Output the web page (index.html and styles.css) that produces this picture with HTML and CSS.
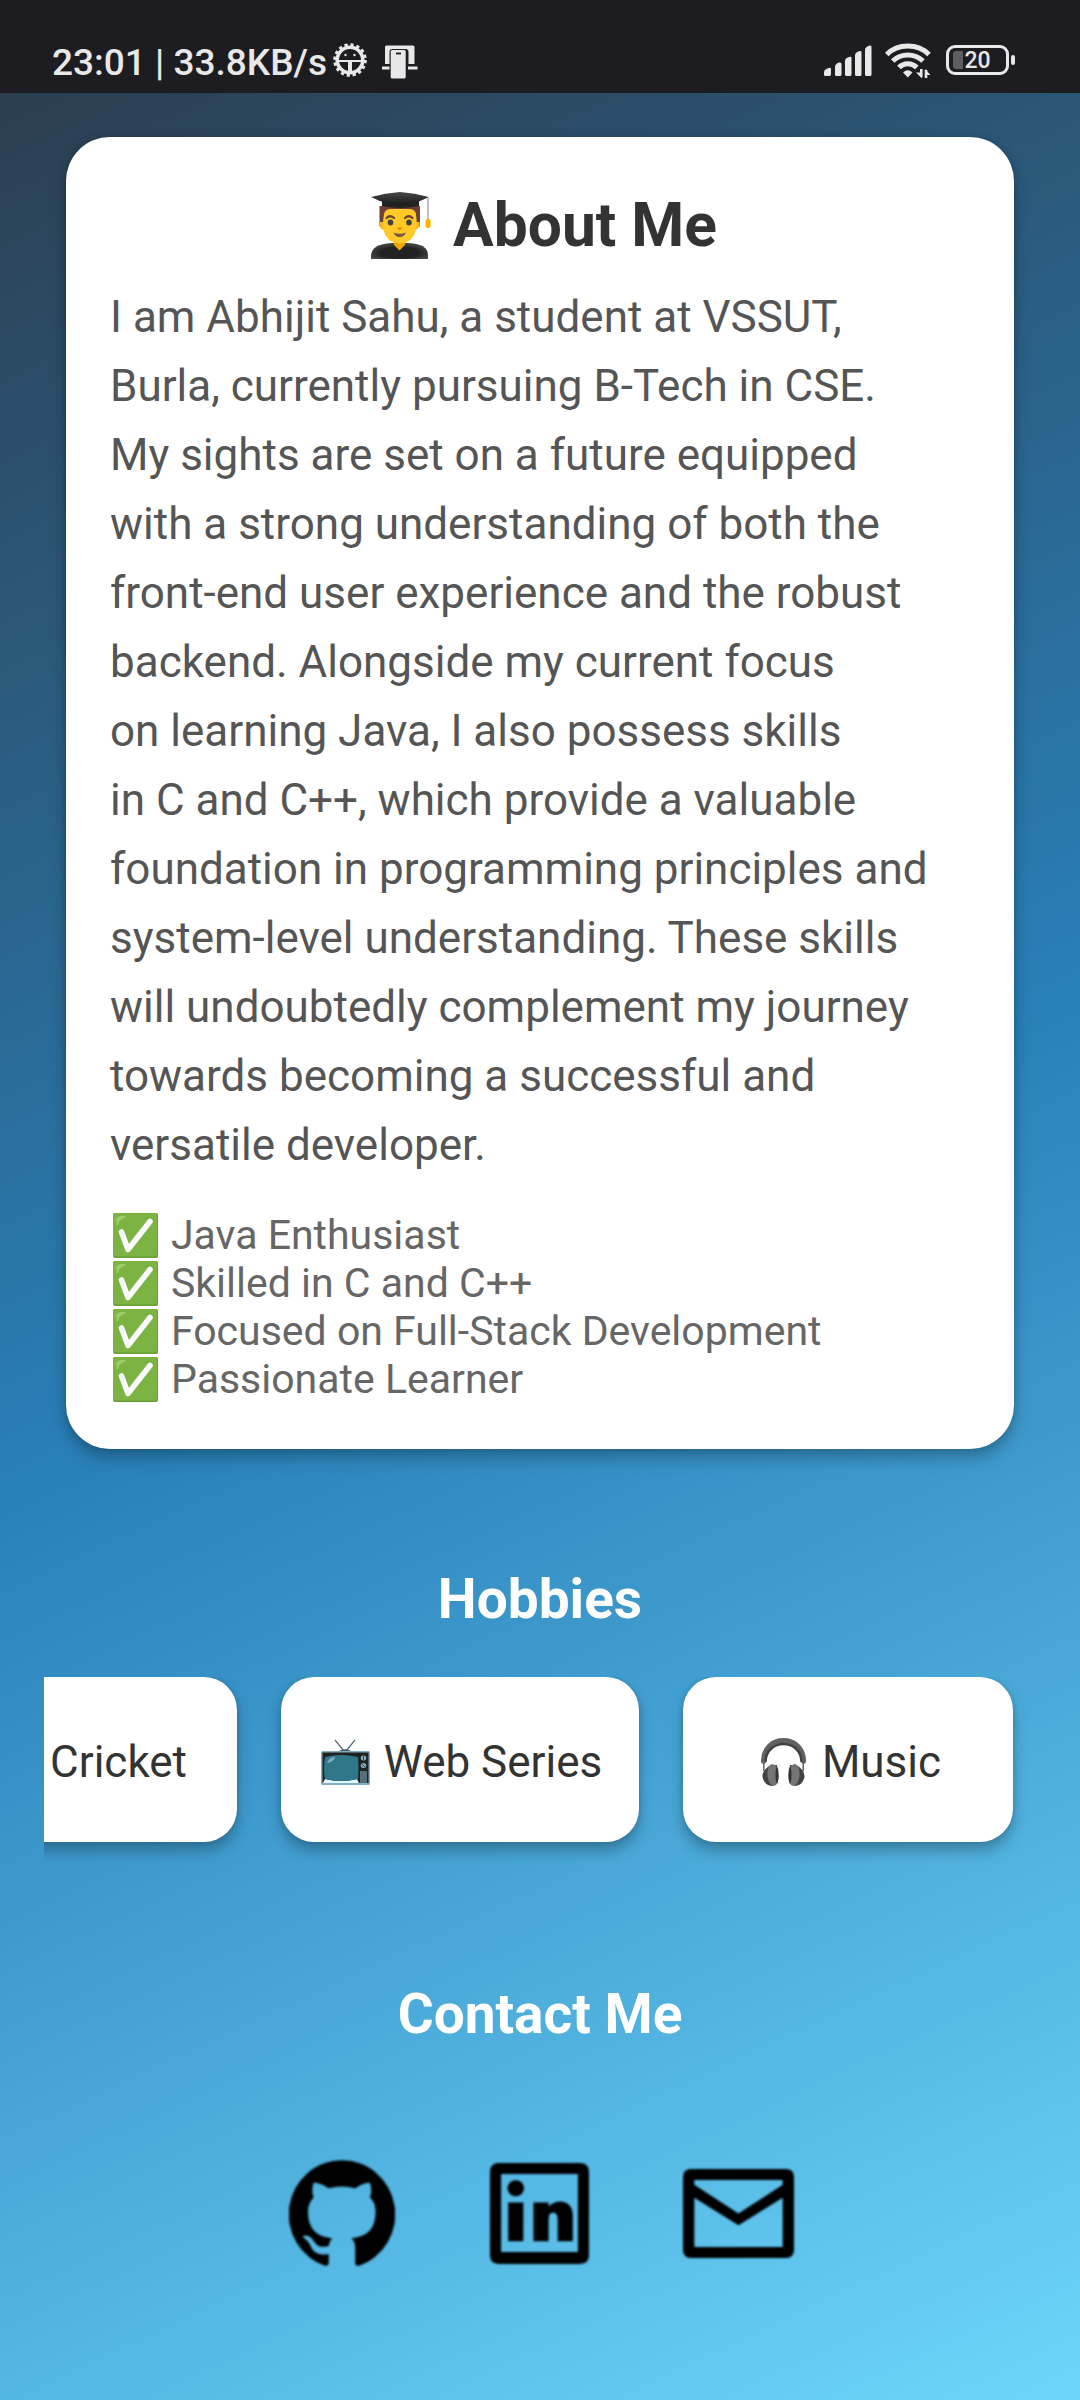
FILE: index.html
```html
<!DOCTYPE html>
<html lang="en">
<head>
<meta charset="utf-8">
<title>About Me</title>
<link rel="stylesheet" href="styles.css">
</head>
<body>
<svg width="0" height="0" class="defs" aria-hidden="true">
  <defs>
    <linearGradient id="cap" x1="0" y1="0" x2="0" y2="1"><stop offset="0" stop-color="#4a4a4a"/><stop offset="1" stop-color="#1c1c1c"/></linearGradient>
    <radialGradient id="gown" cx=".5" cy=".6" r=".6"><stop offset=".55" stop-color="#212121"/><stop offset="1" stop-color="#4c4c4c"/></radialGradient>
    <symbol id="check" viewBox="0 0 45 45">
      <rect width="45" height="45" rx="2" fill="#689f38"/>
      <rect width="44" height="43.500" rx="2" fill="#7cb342"/>
      <path d="M3.500 11V6.500Q4 3 8 3H12Q14 3.500 11.500 5Q6 6 5.300 11Q4 13.500 3.500 11Z" fill="#aed581" opacity=".7"/>
      <path d="M8.500 19L15 36.500L37 8.500" fill="none" stroke="#fafafa" stroke-width="5.600" stroke-linecap="round" stroke-linejoin="round"/>
    </symbol>
  </defs>
</svg>

<header class="status">
  <span class="clock">23:01 | 33.8KB/s</span>
  <svg class="debug" viewBox="0 0 34 34">
    <circle cx="17" cy="17" r="15.300" fill="none" stroke="#e8e8e8" stroke-width="3" stroke-dasharray="3.200 2.807"/>
    <circle cx="17" cy="17" r="12.800" fill="none" stroke="#e8e8e8" stroke-width="3.600"/>
    <path d="M6 18H28" stroke="#e8e8e8" stroke-width="2"/>
    <path d="M17 18V29" stroke="#e8e8e8" stroke-width="4"/>
    <circle cx="12.500" cy="12" r="1.200" fill="#e8e8e8"/><circle cx="21.500" cy="12" r="1.200" fill="#e8e8e8"/>
  </svg>
  <svg class="phone" viewBox="0 0 36 34">
    <path d="M3 19V2Q3 .5 4.500 .5H31Q32.500 .5 32.500 2V19H26.500V7Q26.500 4 23.500 4H10.500Q7.500 4 7.500 7V19Z" fill="#e8e8e8"/>
    <path d="M0 21.500H7.500V24.500H0ZM26 21.500H35.500V24.500H26Z" fill="#e8e8e8"/>
    <rect x="8.700" y="5" width="15" height="28.500" rx="1.500" fill="#e8e8e8"/>
    <path d="M14 8.500H19" stroke="#1d1c21" stroke-width="1.800"/>
  </svg>
  <span class="spacer"></span>
  <svg class="signal" viewBox="0 0 48 32" fill="#e8e8e8">
    <path d="M0 30V26.500Q0 25 3.500 23.500Q7 22 7 24V29Q7 31 5.500 31H1.500Q0 31 0 30Z"/>
    <path d="M11 29.500V22Q11 19 15 17.500Q17.500 17 17.500 19V29.500Q17.500 31 16 31H12.500Q11 31 11 29.500Z"/>
    <path d="M21 29.500V16Q21 13 25 12Q27.500 11 27.500 13V29.500Q27.500 31 26 31H22.500Q21 31 21 29.500Z"/>
    <path d="M31 29.500V10.500Q31 7.500 35 6.300Q37.500 5.500 37.500 7.500V29.500Q37.500 31 36 31H32.500Q31 31 31 29.500Z"/>
    <path d="M41 29.500V5Q41 2 45 .8Q47.500 0 47.500 2V29.500Q47.500 31 46 31H42.500Q41 31 41 29.500Z"/>
  </svg>
  <svg class="wifi" viewBox="0 0 46 36" fill="none" stroke="#e8e8e8" stroke-width="5">
    <path d="M1.700 11.500Q10 3 22.800 3T44 11.500"/>
    <path d="M7.700 18Q14 12 22.800 12T38 18"/>
    <path d="M14 24.500Q17.500 20.700 22.800 20.700T31.800 24.500"/>
    <path d="M18 29.500Q22.800 25 27.500 29.500L22.800 34.500Z" fill="#e8e8e8" stroke="none"/>
    <path d="M36.300 26V34M41 27V35" stroke-width="2.600"/><path d="M31 29.500L37 35.500V29.500ZM40 26L45.500 32H40Z" fill="#e8e8e8" stroke="none"/>
  </svg>
  <span class="battery"><span class="charge"></span><span class="level">20</span></span><span class="tip"></span>
</header>

<main class="screen">
  <section class="about">
    <h1 class="title">
      <svg class="student" viewBox="0 0 60 67">
        <path d="M0 67V63Q1 52 20 51H38Q57 52 57 63V67Z" fill="url(#gown)"/>
        <path d="M23 47H34V53L28.500 58.500L23 53Z" fill="#f2a600"/>
        <path d="M8.500 34V14H49V34Q46 38 41 30H16Q11 38 8.500 34Z" fill="#6d4035"/>
        <path d="M9 30Q8 37 13 38H44Q50 36 48.500 30Z" fill="#f9b81b"/>
        <path d="M13 22Q14 17 20 17H38Q44 17 45 22Q49 50 28.700 51.500Q8 50 13 22Z" fill="#ffca28"/>
        <path d="M15.500 26Q19 22.500 23 26M34 26Q38 22.500 41.500 26" fill="none" stroke="#6d4035" stroke-width="2.200" stroke-linecap="round"/>
        <ellipse cx="19.500" cy="30.500" rx="2.800" ry="3" fill="#404040"/><ellipse cx="38" cy="30.500" rx="2.800" ry="3" fill="#404040"/>
        <path d="M26 35.500Q28.700 35 31.500 35.500Q30 38.500 28.700 38.500T26 35.500Z" fill="#e59600"/>
        <path d="M22.500 40.500Q28.700 43 35 40.500Q33 45 28.700 45T22.500 40.500Z" fill="#795548"/>
        <path d="M57 6V28" stroke="#999" stroke-width="1.200"/>
        <rect x="54.600" y="27" width="5" height="9" rx="2" fill="#ffb300"/>
        <path d="M11 8Q29 3 48 8V14Q29 18 11 14Z" fill="#222"/>
        <path d="M0 5Q14 1 29 0Q44 1 58 5Q50 9 43 11Q29 14 15 11Q8 9 0 5Z" fill="url(#cap)"/>
      </svg>
      <span>About Me</span>
    </h1>
    <p class="bio">I am Abhijit Sahu, a student at VSSUT,<br>Burla, currently pursuing B-Tech in CSE.<br>My sights are set on a future equipped<br>with a strong understanding of both the<br>front-end user experience and the robust<br>backend. Alongside my current focus<br>on learning Java, I also possess skills<br>in C and C++, which provide a valuable<br>foundation in programming principles and<br>system-level understanding. These skills<br>will undoubtedly complement my journey<br>towards becoming a successful and<br>versatile developer.</p>
    <ul class="skills">
      <li><svg class="check"><use href="#check"/></svg>Java Enthusiast</li>
      <li><svg class="check"><use href="#check"/></svg>Skilled in C and C++</li>
      <li><svg class="check"><use href="#check"/></svg>Focused on Full-Stack Development</li>
      <li><svg class="check"><use href="#check"/></svg>Passionate Learner</li>
    </ul>
  </section>

  <h2 class="heading hobbies-heading">Hobbies</h2>
  <div class="hobbies">
    <div class="hobby cricket">Cricket</div>
    <div class="hobby series">
      <svg class="tv" viewBox="0 0 49 46">
        <path d="M14 1L23 12M34 1L25 12" stroke="#546e7a" stroke-width="1.200"/>
        <path d="M17 12.500Q24 8 31 12.500Z" fill="#455a64"/>
        <rect y="12" width="49" height="34" rx="1.500" fill="#82aec0"/>
        <path d="M1.500 13.500H47.500V44H1.500Z" fill="#212121"/>
        <path d="M2 44L4 40Q20 44 36 40L38 44Z" fill="#e0f7fa"/>
        <path d="M4 18Q20 14 37 18Q38 29 37 40Q20 44 4 40Q2 29 4 18Z" fill="#2f7889"/>
        <path d="M6 24Q8 18 14 18Q13 23 6 24Z" fill="#82aec0"/>
        <ellipse cx="42.500" cy="19" rx="2.800" ry="2.500" fill="#82aec0"/><ellipse cx="42.500" cy="26.500" rx="2.800" ry="2.500" fill="#82aec0"/>
        <path d="M42.500 17V21M41 25L44 28" stroke="#37474f"/>
        <rect x="39" y="32" width="7" height="12" fill="#546e7a"/>
      </svg>
      <span>Web Series</span>
    </div>
    <div class="hobby music">
      <svg class="headphones" viewBox="0 0 45 48">
        <path d="M2.800 23V33M42.200 23V33" stroke="#616161" stroke-width="1.500"/>
        <path d="M2.500 23.500C2 -4.500 43 -4.500 42.500 23.500" fill="none" stroke="#616161" stroke-width="5" stroke-linecap="round"/>
        <path d="M4.500 24C5 0 40 0 40.500 24" fill="none" stroke="#424242" stroke-width="2.400"/>
        <path d="M8 28Q1 33 1.500 39Q3 47 11 48L17 45L16 27ZM37 28Q44 33 43.500 39Q42 47 34 48L28 45L29 27Z" fill="#424242"/>
        <ellipse cx="12" cy="37" rx="5.500" ry="11" transform="rotate(-5 12 37)" fill="#757575"/><ellipse cx="33" cy="37" rx="5.500" ry="11" transform="rotate(5 33 37)" fill="#757575"/>
        <ellipse cx="16" cy="37" rx="1.500" ry="8" fill="#333"/><ellipse cx="29" cy="37" rx="1.500" ry="8" fill="#333"/>
      </svg>
      <span>Music</span>
    </div>
  </div>

  <h2 class="heading contact-heading">Contact Me</h2>
  <nav class="contacts">
    <svg class="github" viewBox="0 0 24 24" preserveAspectRatio="none"><path d="M12 .3a12 12 0 0 0-3.800 23.400c.6.100.8-.3.800-.6v-2c-3.300.7-4-1.600-4-1.600-.6-1.400-1.400-1.800-1.400-1.800-1-.7.100-.7.100-.7 1.200 0 1.900 1.200 1.900 1.200 1 1.800 2.800 1.300 3.500 1 0-.8.400-1.300.7-1.600-2.700-.3-5.500-1.300-5.500-6 0-1.200.5-2.300 1.300-3.100-.2-.4-.6-1.600 0-3.200 0 0 1-.3 3.400 1.200a11.500 11.500 0 0 1 6 0c2.300-1.500 3.300-1.200 3.300-1.200.6 1.600.2 2.800 0 3.200.9.800 1.300 1.900 1.300 3.200 0 4.600-2.800 5.600-5.500 5.900.5.400.9 1 .9 2.200v3.300c0 .3.100.7.800.6A12 12 0 0 0 12 .3"/></svg>
    <svg class="linkedin" viewBox="0 0 98 102" preserveAspectRatio="none"><path fill-rule="evenodd" d="M9 0H89Q98 0 98 9V93Q98 102 89 102H9Q0 102 0 93V9Q0 0 9 0ZM11 11V90H87V11Z"/><circle cx="25.500" cy="25.500" r="8.200"/><path d="M18 40H33V79H18ZM43 40H58V44Q63 39 70 39Q82 40 82 54V79H67V57Q67 50 62.500 50T58 57V79H43Z"/></svg>
    <svg class="mail" viewBox="0 0 108 90" preserveAspectRatio="none"><path fill-rule="evenodd" d="M8 0H100Q108 0 108 8V82Q108 90 100 90H8Q0 90 0 82V8Q0 0 8 0ZM11 11V16L54 45L97 16V11ZM11 29V79H97V29L54 57Z"/></svg>
  </nav>
</main>
</body>
</html>
```
FILE: styles.css
```css
* { box-sizing: border-box; }
body {
  margin: 0;
  width: 1080px;
  height: 2400px;
  overflow: hidden;
  font-family: Roboto, sans-serif;
  color: #333;
}
svg { display: block; flex: none; }
.defs { position: absolute; }
.status {
  display: flex;
  align-items: flex-start;
  height: 93px;
  background: #1d1c21;
  color: #e8e8e8;
}
.clock {
  flex: none;
  width: 281px;
  margin: 41px 0 0 52px;
  font-size: 37px;
  font-weight: 500;
  line-height: 44px;
  white-space: nowrap;
}
.debug { width: 34px; height: 34px; margin: 43px 0 0; }
.phone { width: 36px; height: 34px; margin: 44.500px 0 0 15px; }
.spacer { flex: 1; }
.signal { width: 48px; height: 32px; margin: 45px 0 0; }
.wifi { width: 46px; height: 36px; margin: 43px 0 0 13px; }
.battery {
  display: flex;
  align-items: center;
  width: 63px;
  height: 30px;
  margin: 45px 0 0 15px;
  padding-left: 3.500px;
  border: 3px solid #e8e8e8;
  border-radius: 9px;
}
.charge { width: 10px; height: 18px; border-radius: 3px 0 0 3px; background: #5e5e61; }
.level { margin: 2px 0 0 2px; font-size: 23px; line-height: 24px; font-weight: 500; }
.tip { width: 4px; height: 10px; margin: 55px 65px 0 2px; border-radius: 2px; background: #e8e8e8; }

.screen {
  display: flex;
  flex-direction: column;
  height: 2307px;
  padding-top: 44px;
  background: linear-gradient(154.900deg, #2c3e50, #2980b9 50%, #6dd5fa);
}
.about {
  height: 1312px;
  margin: 0 66px;
  padding: 44px;
  border-radius: 44px;
  background: #fff;
  box-shadow: 0 9px 16px rgba(0, 0, 0, .26), 0 0 6px rgba(0, 0, 0, .12);
}
.title {
  display: flex;
  justify-content: center;
  gap: 22px;
  height: 88px;
  margin: 0;
  padding-left: 8px;
  font-size: 60.500px;
  line-height: 89px;
  font-weight: 700;
}
.student { width: 60px; height: 67px; margin-top: 11px; }
.bio {
  margin: 14px 0 0;
  color: #555;
  font-size: 44px;
  line-height: 69px;
  white-space: nowrap;
}
.skills {
  margin: 31px 0 0;
  padding: 0;
  list-style: none;
  color: #666;
  font-size: 41px;
  line-height: 48px;
}
.skills li { display: flex; align-items: center; gap: 13px; height: 48px; white-space: nowrap; }
.check { width: 45px; height: 45px; margin-left: 3px; }
.heading {
  margin: 0;
  color: #fff;
  font-size: 55px;
  line-height: 66px;
  font-weight: 700;
  text-align: center;
}
.hobbies-heading { margin-top: 117px; }
.hobbies {
  display: flex;
  gap: 44px;
  height: 220px;
  margin: 45px 0 0 44px;
  overflow: hidden;
}
.hobby {
  display: flex;
  flex: none;
  align-items: center;
  justify-content: center;
  height: 165px;
  padding-top: 4px;
  border-radius: 33px;
  background: #fff;
  box-shadow: 0 9px 14px rgba(0, 0, 0, .26), 0 0 5px rgba(0, 0, 0, .12);
  font-size: 44px;
  white-space: nowrap;
}
.cricket { width: 330px; margin-left: -137px; padding-right: 50px; justify-content: flex-end; }
.series { width: 358px; padding-left: 3px; gap: 14px; }
.music { width: 330px; padding-left: 6px; gap: 16px; }
.tv { width: 49px; height: 46px; }
.headphones { width: 45px; height: 48px; }
.contact-heading { margin-top: 84px; }
.contacts { display: flex; align-items: flex-start; margin: 112px 0 0 289px; }
.contacts svg { filter: blur(1px); }
.github { width: 106px; height: 108px; }
.linkedin { width: 99px; height: 101px; margin: 4px 0 0 95px; }
.mail { width: 111px; height: 89px; margin: 10px 0 0 94px; }
```
